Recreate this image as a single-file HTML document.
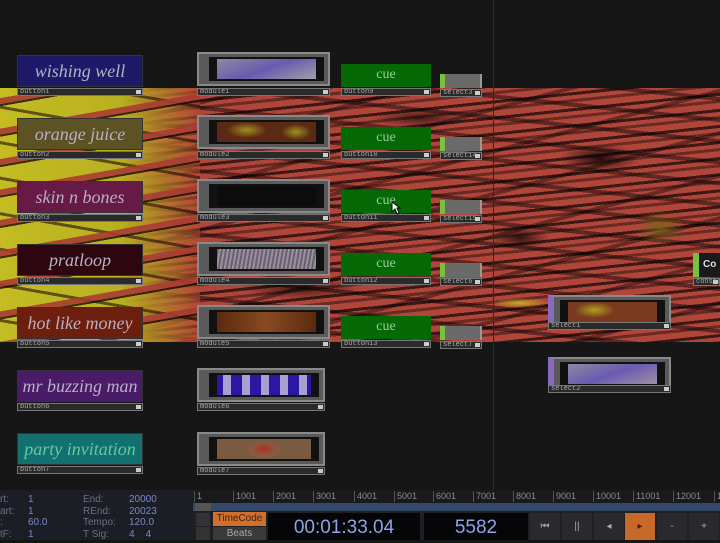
<!DOCTYPE html>
<html><head><style>
*{margin:0;padding:0;box-sizing:border-box}
body{width:720px;height:540px;overflow:hidden;background:#161616;position:relative;font-family:"Liberation Sans",sans-serif}
.a{position:absolute}
.band{left:0;top:88px;width:720px;height:254px;
background:
radial-gradient(ellipse 40px 14px at 600px 70px,rgba(0,0,0,.8),transparent),
radial-gradient(ellipse 30px 12px at 520px 150px,rgba(0,0,0,.7),transparent),
radial-gradient(ellipse 50px 10px at 420px 30px,rgba(0,0,0,.6),transparent),
radial-gradient(ellipse 60px 12px at 300px 200px,rgba(0,0,0,.6),transparent),
radial-gradient(ellipse 25px 18px at 660px 140px,rgba(120,100,20,.8),transparent),
radial-gradient(ellipse 20px 6px at 640px 220px,rgba(200,200,30,.9),transparent),
radial-gradient(ellipse 30px 5px at 520px 215px,rgba(200,200,30,.8),transparent),
repeating-linear-gradient(174deg,rgba(0,0,0,.65) 0 3px,transparent 3px 7px,rgba(0,0,0,.4) 7px 10px,transparent 10px 16px),
repeating-linear-gradient(186deg,transparent 0 9px,rgba(0,0,0,.45) 9px 13px,transparent 13px 21px),
repeating-linear-gradient(165deg,transparent 0 23px,rgba(0,0,0,.4) 23px 27px,transparent 27px 41px),
#b0463a}
.yel{left:0;top:88px;width:200px;height:254px;
background:
repeating-linear-gradient(170deg,transparent 0 10px,rgba(170,60,50,.9) 10px 16px,rgba(20,10,10,.8) 16px 18px,transparent 18px 30px),
repeating-linear-gradient(190deg,transparent 0 17px,rgba(30,10,10,.6) 17px 20px,transparent 20px 35px),
linear-gradient(90deg,#c4bc22,#b8b020 60%,rgba(180,70,50,.5));}
.btn{left:17px;width:126px;height:32px;font-family:"Liberation Serif",serif;font-style:italic;font-size:18px;color:#b8b0c4;text-align:center;line-height:31px;border:1px solid #333;white-space:nowrap;overflow:hidden}
.lbl{height:8px;background:#2a2a2a;border:1px solid #777;font-family:"Liberation Mono",monospace;font-size:7px;color:#aaa;line-height:6px;padding-left:2px;overflow:hidden}
.lbl:after{content:"";position:absolute;right:1px;top:1px;width:5px;height:4px;background:#ccc}
.mod{left:197px;width:133px;height:34px;background:#5a5a5a;border:2px solid #8a8a8a}
.mod i{position:absolute;left:10px;right:4px;top:3px;bottom:3px;border:2px solid #111;border-left-width:8px;border-right-width:8px}
.cue{left:341px;width:90px;height:23px;background:#056a05;color:#9ccc9c;font-family:"Liberation Serif",serif;font-size:14px;text-align:center;line-height:22px}
.sel{left:440px;width:42px;height:14px;background:#6a6a6a;border-left:5px solid #7ac040;border-right:2px solid #999}
.tl{font-size:10px;color:#6c7080}
.tv{font-size:10px;color:#7888c8}
.rk{top:491px;font-size:9px;color:#8a8a9a;border-left:1px solid #555;padding-left:2px;height:11px;line-height:11px}
.tb{top:513px;width:30px;height:27px;background:#2a2a2e;color:#aaa;font-size:10px;text-align:center;line-height:27px}
</style></head><body>
<div class="a band"></div>
<div class="a yel"></div>
<div class="a" style="left:493px;top:0;width:1px;height:490px;background:#2a2a2a"></div>

<div class="a btn" style="top:55px;background:#1e1a6a">wishing well</div>
<div class="a lbl" style="left:17px;top:88px;width:126px">button1</div>
<div class="a btn" style="top:118px;background:#5c5224">orange juice</div>
<div class="a lbl" style="left:17px;top:151px;width:126px">button2</div>
<div class="a btn" style="top:181px;background:#681a46">skin n bones</div>
<div class="a lbl" style="left:17px;top:214px;width:126px">button3</div>
<div class="a btn" style="top:244px;background:#2e0610">pratloop</div>
<div class="a lbl" style="left:17px;top:277px;width:126px">button4</div>
<div class="a btn" style="top:307px;background:#6e1e0c">hot like money</div>
<div class="a lbl" style="left:17px;top:340px;width:126px">button5</div>
<div class="a btn" style="top:370px;background:#4a1c68">mr buzzing man</div>
<div class="a lbl" style="left:17px;top:403px;width:126px">button6</div>
<div class="a btn" style="top:433px;background:#147070;color:#60c8a0">party invitation</div>
<div class="a lbl" style="left:17px;top:466px;width:126px">button7</div>

<div class="a mod" style="top:52px"><i style="background:linear-gradient(160deg,#8a8aa0,#6a5ab0 50%,#a0a0a8)"></i></div>
<div class="a lbl" style="left:197px;top:88px;width:133px">module1</div>
<div class="a mod" style="top:115px"><i style="background:radial-gradient(ellipse 20px 8px at 30% 40%,#a09020,transparent),radial-gradient(ellipse 15px 8px at 80% 50%,#a09020,transparent),#5a2a14"></i></div>
<div class="a lbl" style="left:197px;top:151px;width:133px">module2</div>
<div class="a mod" style="top:179px"><i style="background:#0c0c0c"></i></div>
<div class="a lbl" style="left:197px;top:214px;width:133px">module3</div>
<div class="a mod" style="top:242px"><i style="background:repeating-linear-gradient(100deg,#6a6070 0 2px,#9a90a0 2px 4px)"></i></div>
<div class="a lbl" style="left:197px;top:277px;width:133px">module4</div>
<div class="a mod" style="top:305px"><i style="background:linear-gradient(90deg,#5a2a10,#8a4a20,#5a2a10)"></i></div>
<div class="a lbl" style="left:197px;top:340px;width:133px">module5</div>
<div class="a mod" style="top:368px;width:128px"><i style="background:repeating-linear-gradient(90deg,#2a18a0 0 6px,#a8a0d0 6px 14px,#2a18a0 14px 19px)"></i></div>
<div class="a lbl" style="left:197px;top:403px;width:128px">module6</div>
<div class="a mod" style="top:432px;width:128px"><i style="background:radial-gradient(ellipse 20px 10px,#b03020,#8a5a40 60%,#7a5a40)"></i></div>
<div class="a lbl" style="left:197px;top:467px;width:128px">module7</div>

<div class="a cue" style="top:64px">cue</div>
<div class="a lbl" style="left:341px;top:88px;width:90px">button9</div>
<div class="a cue" style="top:127px">cue</div>
<div class="a lbl" style="left:341px;top:151px;width:90px">button10</div>
<div class="a cue" style="top:190px">cue</div>
<div class="a lbl" style="left:341px;top:214px;width:90px">button11</div>
<div class="a cue" style="top:253px">cue</div>
<div class="a lbl" style="left:341px;top:277px;width:90px">button12</div>
<div class="a cue" style="top:316px">cue</div>
<div class="a lbl" style="left:341px;top:340px;width:90px">button13</div>

<div class="a sel" style="top:74px"></div><div class="a lbl" style="left:440px;top:89px;width:42px">select3</div>
<div class="a sel" style="top:137px"></div><div class="a lbl" style="left:440px;top:152px;width:42px">select14</div>
<div class="a sel" style="top:200px"></div><div class="a lbl" style="left:440px;top:215px;width:42px">select15</div>
<div class="a sel" style="top:263px"></div><div class="a lbl" style="left:440px;top:278px;width:42px">select6</div>
<div class="a sel" style="top:326px"></div><div class="a lbl" style="left:440px;top:341px;width:42px">select7</div>

<div class="a mod" style="left:548px;top:295px;width:123px;border-left:6px solid #8a6ac0"><i style="left:6px;background:radial-gradient(ellipse 20px 8px at 30% 40%,#b0a020,transparent),#7a3a20"></i></div>
<div class="a lbl" style="left:548px;top:322px;width:123px">select1</div>
<div class="a mod" style="left:548px;top:357px;width:123px;border-left:6px solid #8a6ac0"><i style="left:6px;background:linear-gradient(160deg,#8a8aa0,#6a5ab0 50%,#a090a8)"></i></div>
<div class="a lbl" style="left:548px;top:385px;width:123px">select2</div>
<div class="a" style="left:693px;top:253px;width:27px;height:24px;background:#1a1a1a;border-left:6px solid #7ac040;color:#ddd;font-size:10px;font-weight:bold;line-height:24px;padding-left:4px">Co</div>
<div class="a lbl" style="left:693px;top:278px;width:27px">consta</div>

<svg class="a" style="left:391px;top:201px" width="10" height="14"><path d="M1 1L1 11L4 8L6 13L8 12L6 7L9 7Z" fill="#fff" stroke="#000" stroke-width="1"/></svg>

<div class="a" style="left:0;top:490px;width:193px;height:50px;background:#1c1e26"></div>
<div class="a tl" style="left:0;top:494px;line-height:11.5px">rt:<br>art:<br>:<br>tF:</div>
<div class="a tv" style="left:28px;top:494px;line-height:11.5px">1<br>1<br>60.0<br>1</div>
<div class="a tl" style="left:83px;top:494px;line-height:11.5px">End:<br>REnd:<br>Tempo:<br>T Sig:</div>
<div class="a tv" style="left:129px;top:494px;line-height:11.5px">20000<br>20023<br>120.0<br>4 &nbsp;&nbsp;&nbsp;4</div>

<div class="a" style="left:193px;top:490px;width:527px;height:13px;background:#1a1a1c"></div>
<div class="a rk" style="left:194px">1</div>
<div class="a rk" style="left:233px">1001</div>
<div class="a rk" style="left:273px">2001</div>
<div class="a rk" style="left:313px">3001</div>
<div class="a rk" style="left:354px">4001</div>
<div class="a rk" style="left:394px">5001</div>
<div class="a rk" style="left:433px">6001</div>
<div class="a rk" style="left:473px">7001</div>
<div class="a rk" style="left:513px">8001</div>
<div class="a rk" style="left:553px">9001</div>
<div class="a rk" style="left:593px">10001</div>
<div class="a rk" style="left:633px">11001</div>
<div class="a rk" style="left:673px">12001</div>
<div class="a rk" style="left:714px">1</div>
<div class="a" style="left:193px;top:503px;width:527px;height:8px;background:#34486a"></div>
<div class="a" style="left:195px;top:503px;width:16px;height:8px;background:#555"></div>
<div class="a" style="left:193px;top:511px;width:527px;height:29px;background:#202024"></div>
<div class="a" style="left:196px;top:513px;width:14px;height:13px;background:#333"></div>
<div class="a" style="left:196px;top:527px;width:14px;height:13px;background:#333"></div>
<div class="a" style="left:213px;top:512px;width:53px;height:14px;background:#d0702e;color:#402010;font-size:10px;text-align:center;line-height:14px">TimeCode</div>
<div class="a" style="left:213px;top:527px;width:53px;height:13px;background:#3a3a3c;color:#aaa;font-size:10px;text-align:center;line-height:14px">Beats</div>
<div class="a" style="left:268px;top:513px;width:152px;height:27px;background:#060608;color:#8ea4e4;font-size:19px;text-align:center;line-height:30px">00:01:33.04</div>
<div class="a" style="left:424px;top:513px;width:104px;height:27px;background:#060608;color:#8ea4e4;font-size:19px;text-align:center;line-height:30px">5582</div>
<div class="a tb" style="left:530px">⏮</div>
<div class="a tb" style="left:562px">||</div>
<div class="a tb" style="left:594px">◂</div>
<div class="a tb" style="left:625px;background:#c8682a;color:#5a1a00">▸</div>
<div class="a tb" style="left:657px">-</div>
<div class="a tb" style="left:689px">+</div>
</body></html>
